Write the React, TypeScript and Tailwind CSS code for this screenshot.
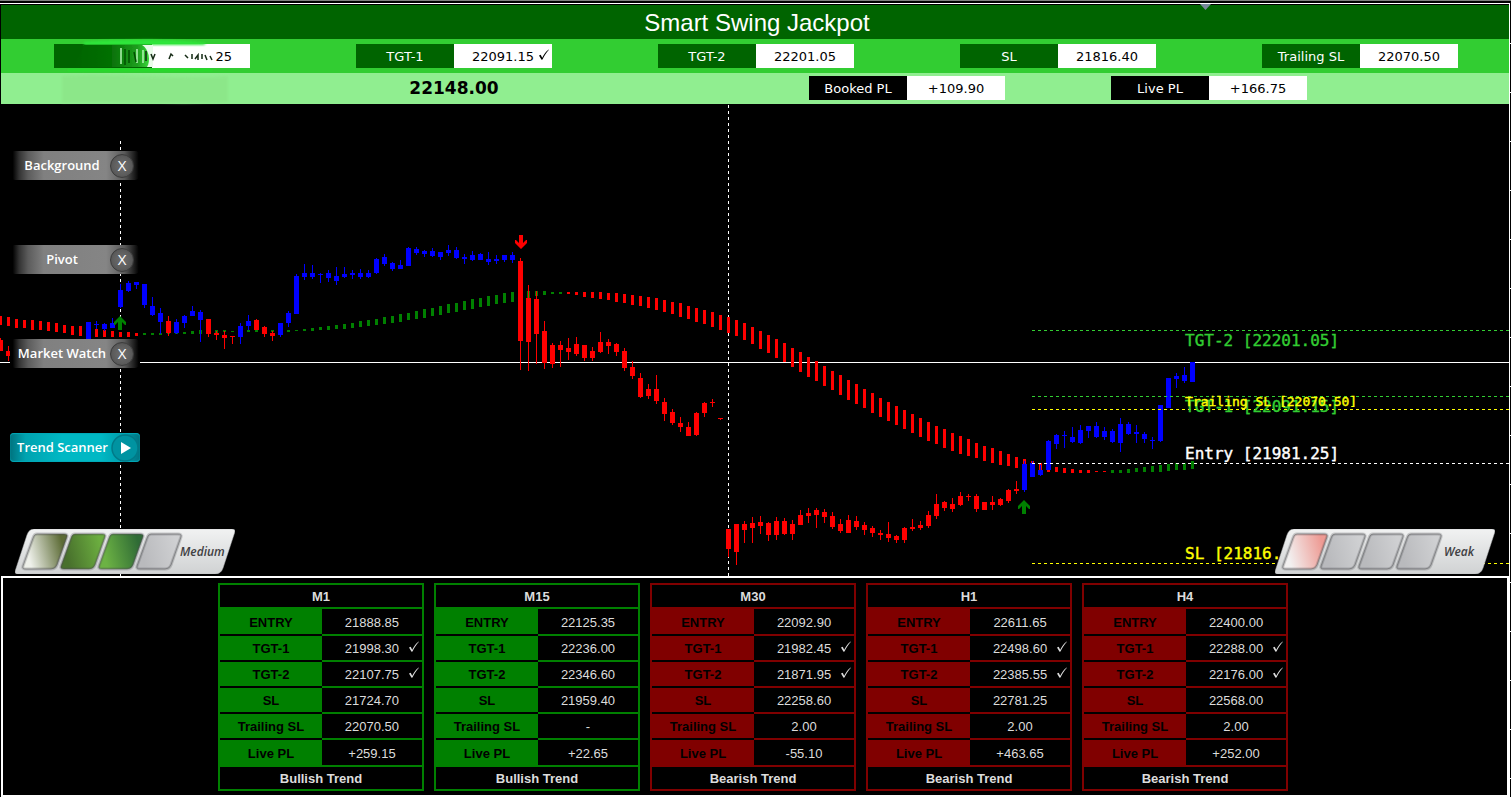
import { useId } from "react";

type Candle = [high: number, low: number, top: number, bottom: number, up: boolean];

interface TrendTable {
  frame: string;
  bullish: boolean;
  rows: { label: string; value: string; hit?: boolean }[];
}

const STEP = 8;
const CHART_TOP = 104;

// The oldest two bars stand apart from the visible run that starts at x = 88.
const EARLY_CANDLES: Candle[] = [
  [338, 351, 340, 351, false],
  [346, 361, 351, 356, false],
];

const CANDLES: Candle[] = [
  [322, 345, 322, 345, true], [321, 329, 324, 325, true], [323, 331, 324, 329, true], [318, 328, 323, 328, true],
  [284, 308, 290, 307, true], [281, 292, 283, 291, true], [282, 289, 282, 285, true], [284, 308, 284, 305, true],
  [297, 316, 306, 315, true], [308, 334, 313, 322, true], [316, 336, 321, 333, false], [319, 334, 322, 333, true],
  [315, 328, 316, 323, true], [306, 316, 311, 316, true], [310, 342, 312, 320, true], [319, 337, 319, 334, false],
  [331, 340, 333, 335, false], [331, 349, 335, 338, false], [336, 344, 336, 337, false], [323, 344, 326, 337, true],
  [315, 330, 321, 326, true], [319, 330, 320, 330, false], [326, 337, 327, 334, false], [331, 341, 333, 336, false],
  [323, 337, 323, 335, true], [311, 327, 313, 323, true], [274, 314, 276, 314, true], [264, 280, 273, 277, true],
  [265, 279, 273, 277, true], [273, 283, 274, 275, true], [270, 282, 273, 278, true], [267, 285, 276, 281, true],
  [267, 278, 274, 277, true], [270, 279, 273, 275, true], [269, 279, 273, 277, true], [270, 278, 273, 277, true],
  [258, 274, 259, 273, true], [254, 266, 257, 264, true], [262, 271, 263, 269, true], [260, 269, 265, 269, true],
  [247, 266, 248, 266, true], [247, 255, 249, 253, true], [250, 257, 251, 254, true], [248, 257, 251, 256, true],
  [252, 260, 252, 257, true], [245, 256, 250, 253, true], [247, 259, 250, 258, true], [254, 264, 257, 259, true],
  [251, 261, 255, 260, true], [253, 260, 254, 260, true], [252, 265, 259, 262, true], [255, 264, 259, 261, true],
  [255, 262, 255, 260, true], [252, 263, 255, 260, true], [258, 370, 261, 341, false], [285, 371, 298, 342, false],
  [291, 364, 299, 334, false], [321, 369, 331, 363, false], [343, 368, 345, 364, false], [341, 367, 345, 350, false],
  [338, 360, 348, 352, false], [337, 356, 344, 354, false], [345, 361, 345, 358, false], [347, 361, 351, 358, false],
  [332, 353, 342, 352, false], [339, 354, 342, 346, false], [343, 356, 344, 352, false], [348, 371, 351, 368, false],
  [361, 379, 367, 376, false], [373, 398, 378, 397, false], [384, 399, 389, 396, false], [375, 404, 389, 401, false],
  [398, 421, 402, 414, false], [409, 425, 412, 423, false], [417, 432, 423, 427, false], [422, 436, 427, 436, false],
  [412, 436, 413, 435, false], [402, 417, 403, 413, false], [399, 407, 402, 403, false], [418, 420, 418, 419, false],
  [529, 557, 529, 549, false], [524, 565, 524, 552, false], [521, 543, 524, 530, false], [517, 543, 523, 528, false],
  [516, 534, 522, 526, false], [522, 541, 523, 535, false], [517, 540, 521, 535, false], [518, 535, 521, 534, false],
  [520, 540, 524, 534, false], [510, 525, 515, 525, false], [508, 523, 513, 516, false], [508, 528, 510, 515, false],
  [509, 523, 512, 517, false], [512, 529, 516, 527, false], [519, 533, 524, 531, false], [515, 533, 520, 533, false],
  [516, 530, 521, 527, false], [522, 535, 525, 530, false], [526, 537, 528, 533, false], [530, 540, 533, 535, false],
  [522, 542, 534, 538, false], [535, 543, 536, 540, false], [527, 543, 528, 540, false], [519, 531, 527, 529, false],
  [521, 530, 525, 528, false], [511, 528, 515, 526, false], [494, 519, 504, 516, false], [501, 511, 502, 508, false],
  [498, 512, 504, 509, false], [492, 506, 496, 505, false], [494, 501, 496, 497, false], [494, 512, 496, 509, false],
  [502, 510, 502, 510, false], [496, 510, 502, 505, false], [498, 506, 499, 505, false], [489, 503, 490, 501, false],
  [481, 494, 489, 491, false], [461, 492, 464, 490, true], [461, 477, 463, 477, true], [465, 476, 470, 475, true],
  [440, 470, 441, 470, true], [434, 449, 435, 444, true], [431, 448, 435, 436, true], [427, 443, 437, 442, true],
  [425, 444, 430, 443, true], [426, 438, 426, 431, true], [422, 438, 426, 437, true], [427, 440, 431, 437, true],
  [429, 443, 431, 442, true], [418, 452, 424, 443, true], [422, 435, 424, 434, true], [425, 443, 432, 434, true],
  [432, 443, 434, 439, true], [437, 449, 440, 441, true], [405, 442, 405, 441, true], [378, 408, 378, 408, true],
  [373, 388, 376, 379, true], [367, 383, 375, 381, true], [362, 382, 362, 382, true],
];

// Moving average ribbon, one [top, bottom] pair per bar from x = 0.
const RIBBON: [number, number][] = [
  [316, 325], [317, 326], [319, 328], [320, 328], [320, 330], [321, 330], [322, 331], [323, 332], [325, 333], [326, 335],
  [326, 336], [327, 337], [329, 337], [330, 337], [331, 337], [332, 337], [332, 337], [333, 336], [333, 335], [333, 335],
  [333, 335], [333, 334], [333, 334], [332, 334], [331, 334], [330, 334], [330, 333], [330, 333], [330, 332], [331, 332],
  [331, 332], [330, 332], [330, 332], [330, 332], [330, 332], [330, 332], [330, 332], [330, 331], [329, 331], [328, 331],
  [327, 330], [326, 330], [325, 329], [324, 329], [323, 328], [321, 327], [320, 326], [319, 325], [317, 324], [316, 323],
  [314, 322], [313, 320], [311, 319], [309, 318], [308, 316], [306, 315], [304, 313], [303, 312], [301, 310], [299, 309],
  [298, 307], [296, 306], [295, 304], [293, 303], [292, 302], [292, 301], [291, 300], [291, 296], [291, 295], [292, 294],
  [292, 294], [292, 294], [292, 295], [292, 297], [292, 298], [292, 299], [293, 300], [293, 302], [294, 303], [295, 305],
  [296, 306], [297, 308], [298, 310], [300, 312], [302, 314], [303, 317], [306, 319], [308, 322], [310, 324], [312, 327],
  [315, 330], [317, 333], [320, 336], [323, 340], [327, 344], [331, 349], [335, 353], [339, 358], [343, 362], [348, 367],
  [352, 372], [357, 377], [361, 381], [366, 386], [371, 390], [375, 395], [380, 400], [384, 404], [389, 408], [393, 413],
  [398, 417], [402, 421], [406, 425], [410, 429], [414, 433], [418, 437], [422, 441], [426, 444], [429, 448], [433, 451],
  [436, 454], [439, 456], [443, 458], [446, 461], [448, 463], [451, 465], [454, 466], [457, 468], [459, 469], [461, 470],
  [463, 471], [465, 472], [467, 472], [468, 473], [469, 473], [470, 473], [470, 473], [471, 472], [471, 472], [470, 473],
  [470, 473], [469, 473], [468, 472], [467, 472], [466, 472], [465, 472], [464, 471], [463, 470], [463, 470], [461, 469],
];

const LEVELS = [
  { y: 330, color: "#32cd32", text: "TGT-2 [22201.05]", size: 16, baseline: 346 },
  { y: 396, color: "#32cd32", text: "TGT-1 [22091.15]", size: 16, baseline: 412 },
  { y: 463, color: "#ffffff", text: "Entry [21981.25]", size: 16, baseline: 459 },
  { y: 563, color: "#ffff00", text: "SL [21816.40]", size: 16, baseline: 559 },
  { y: 409, color: "#ffff00", text: "Trailing SL [22070.50]", size: 13, baseline: 406 },
];

const TABLES: TrendTable[] = [
  {
    frame: "M1",
    bullish: true,
    rows: [
      { label: "ENTRY", value: "21888.85" },
      { label: "TGT-1", value: "21998.30", hit: true },
      { label: "TGT-2", value: "22107.75", hit: true },
      { label: "SL", value: "21724.70" },
      { label: "Trailing SL", value: "22070.50" },
      { label: "Live PL", value: "+259.15" },
    ],
  },
  {
    frame: "M15",
    bullish: true,
    rows: [
      { label: "ENTRY", value: "22125.35" },
      { label: "TGT-1", value: "22236.00" },
      { label: "TGT-2", value: "22346.60" },
      { label: "SL", value: "21959.40" },
      { label: "Trailing SL", value: "-" },
      { label: "Live PL", value: "+22.65" },
    ],
  },
  {
    frame: "M30",
    bullish: false,
    rows: [
      { label: "ENTRY", value: "22092.90" },
      { label: "TGT-1", value: "21982.45", hit: true },
      { label: "TGT-2", value: "21871.95", hit: true },
      { label: "SL", value: "22258.60" },
      { label: "Trailing SL", value: "2.00" },
      { label: "Live PL", value: "-55.10" },
    ],
  },
  {
    frame: "H1",
    bullish: false,
    rows: [
      { label: "ENTRY", value: "22611.65" },
      { label: "TGT-1", value: "22498.60", hit: true },
      { label: "TGT-2", value: "22385.55", hit: true },
      { label: "SL", value: "22781.25" },
      { label: "Trailing SL", value: "2.00" },
      { label: "Live PL", value: "+463.65" },
    ],
  },
  {
    frame: "H4",
    bullish: false,
    rows: [
      { label: "ENTRY", value: "22400.00" },
      { label: "TGT-1", value: "22288.00", hit: true },
      { label: "TGT-2", value: "22176.00", hit: true },
      { label: "SL", value: "22568.00" },
      { label: "Trailing SL", value: "2.00" },
      { label: "Live PL", value: "+252.00" },
    ],
  },
];

function ribbonColor(index: number) {
  if (index < 18) return "#ff0000";
  if (index < 71) return "#008000";
  if (index < 139) return "#ff0000";
  return "#008000";
}

function CheckMark({ className }: { className: string }) {
  return (
    <svg className={className} width="12" height="12" viewBox="0 0 12 12" fill="currentColor" aria-label="hit">
      <path d="M1 6.600 L2.700 5.800 L4.200 8.800 C6 5 8 2.400 10.800 0.400 L11 0.700 C8.200 3.600 6.100 7 4.500 10.600 L3.500 10.800 Z" />
    </svg>
  );
}

function Field({ label, value, dark, hit }: { label: string; value: string; dark?: boolean; hit?: boolean }) {
  return (
    <div className="flex h-6 w-[196px] text-[13px] leading-[26px]">
      <span className={`w-1/2 text-center text-white ${dark ? "bg-black" : "bg-[#006400]"}`}>{label}</span>
      <span className="relative w-1/2 bg-white text-center text-black">
        {value}
        {hit && <CheckMark className="absolute top-[5px] right-[2px]" />}
      </span>
    </div>
  );
}

// Entry price with a smudge painted over everything but the last two digits.
function SmudgedEntry() {
  return (
    <div className="relative flex h-6 w-[196px] text-[13px] leading-[26px]">
      <span className="w-1/2 bg-[#006400]" />
      <span className="w-1/2 bg-white pr-[18px] text-right text-black">25</span>
      <svg className="absolute -top-2 left-0" width="196" height="72" viewBox="0 0 196 72" aria-hidden="true">
        <defs>
          <linearGradient id="smudge" x1="0" x2="1">
            <stop offset="0" stopColor="#006400" />
            <stop offset="0.5" stopColor="#067006" />
            <stop offset="0.68" stopColor="#128a12" />
            <stop offset="0.85" stopColor="#1f9f1f" />
            <stop offset="1" stopColor="#3ad63a" />
          </linearGradient>
          <filter id="soft" x="-20%" y="-50%" width="140%" height="200%">
            <feGaussianBlur stdDeviation="1" />
          </filter>
          <filter id="edge" x="-10%" y="-10%" width="120%" height="120%">
            <feGaussianBlur stdDeviation="0.5" />
          </filter>
        </defs>
        <path d="M30 6 C70 3 120 3 152 7 L150 9 H30 Z" fill="#2ee63a" filter="url(#soft)" />
        <path d="M14 33 H158 V35 H14 Z" fill="#24e02c" filter="url(#soft)" />
        <path d="M88 9 H99 V31 H93 Z" fill="#e9fbe9" />
        <path d="M30 9 H88 C95 13 97 25 93 31 H20 Z" fill="url(#smudge)" filter="url(#edge)" />
        <g fill="none" filter="url(#edge)">
          <path d="M67 12 V28 M83 13 V27 M89 14 V27" stroke="#b5f5b5" strokeWidth="1.5" />
          <path d="M71 13 V29 M75 14 V27 M80 16 L82 26" stroke="#055005" strokeWidth="1.500" />
          <path
            d="M92 15 V25 M97 18 L99 23 L101 18 M115 23 L117 18 L119 20 M131 19 L134 22 M138 18 V23 M141 23 L144 19 V24 M148 18 V23 M151 19 L153 24 M156 20 L158 24"
            stroke="#152a15"
            strokeWidth="1.500"
          />
        </g>
        <path d="M8 40 C60 36 120 44 174 40 V66 C120 70 60 64 8 67 Z" fill="#8be486" opacity="0.6" filter="url(#soft)" />
      </svg>
    </div>
  );
}

function Header() {
  return (
    <header className="relative ml-px font-['Verdana','DejaVu_Sans',sans-serif]">
      <svg className="absolute -top-px left-[1199px]" width="11" height="6" viewBox="0 0 11 6" aria-hidden="true">
        <path d="M0 0 H11 L5.5 6 Z" fill="#778899" />
      </svg>
      <h1 className="h-[34px] bg-[#006400] pl-1 text-center font-['Liberation_Sans',sans-serif] text-[24px] leading-9 text-white">
        Smart Swing Jackpot
      </h1>
      <div className="flex h-[34px] items-center justify-between bg-[#32cd32] pr-[51px] pl-[53px]">
        <SmudgedEntry />
        <Field label="TGT-1" value="22091.15" hit />
        <Field label="TGT-2" value="22201.05" />
        <Field label="SL" value="21816.40" />
        <Field label="Trailing SL" value="22070.50" />
      </div>
      <div className="flex h-[31px] items-center bg-[#90ee90] pr-[202px] pb-px pl-[355px]">
        <strong className="w-[196px] text-center text-[17px] leading-6 text-black">22148.00</strong>
        <div className="ml-auto flex gap-[106px]">
          <Field label="Booked PL" value="+109.90" dark />
          <Field label="Live PL" value="+166.75" dark />
        </div>
      </div>
    </header>
  );
}

function CandleBar({ x, candle }: { x: number; candle: Candle }) {
  const [high, low, top, bottom, up] = candle;
  return (
    <g fill={up ? "#0000ff" : "#ff0000"}>
      <rect x={x} y={high} width="1" height={low - high} />
      <rect x={x - 2} y={top} width="5" height={bottom - top} />
    </g>
  );
}

function Arrow({ x, y, color, down }: { x: number; y: number; color: string; down?: boolean }) {
  return (
    <path
      transform={`translate(${x} ${y}) scale(1 ${down ? -1 : 1})`}
      d="M0 -7 L6 -1 V2 H5 L2 -1 V7 H-2 V-1 L-5 2 H-6 V-1 Z"
      fill={color}
    />
  );
}

function PriceChart() {
  return (
    <svg className="block w-full" height="472" role="img" aria-label="Price chart">
      <g transform={`translate(0 ${-CHART_TOP})`}>
        <g shapeRendering="crispEdges">
          <line x1="120.5" y1="141" x2="120.5" y2="576" stroke="#fff" strokeDasharray="3 3" />
          <line x1="728.5" y1="105" x2="728.5" y2="576" stroke="#fff" strokeDasharray="3 3" />
          <rect x="0" y="362" width="100%" height="1" fill="#fff" />
          {RIBBON.map(([top, bottom], i) => (
            <rect key={i} x={i * STEP - 1} y={top} width="3" height={bottom - top} fill={ribbonColor(i)} />
          ))}
          {EARLY_CANDLES.map((candle, i) => (
            <CandleBar key={i} x={i * STEP} candle={candle} />
          ))}
          {CANDLES.map((candle, i) => (
            <CandleBar key={i} x={88 + i * STEP} candle={candle} />
          ))}
          {LEVELS.map((level) => (
            <line
              key={level.text}
              x1="1032"
              x2="100%"
              y1={level.y + 0.5}
              y2={level.y + 0.5}
              stroke={level.color}
              strokeDasharray="3 3"
            />
          ))}
        </g>
        <Arrow x={120} y={323} color="#008000" />
        <Arrow x={1024} y={507} color="#008000" />
        <Arrow x={521} y={242} color="#ff0000" down />
        <g className="font-['DejaVu_Sans_Mono',monospace]">
          {LEVELS.map((level) => (
            <text key={level.text} x="1185" y={level.baseline} fontSize={level.size} fill={level.color} stroke={level.color} strokeWidth="0.4">
              {level.text}
            </text>
          ))}
        </g>
      </g>
    </svg>
  );
}

function PanelButton({ label }: { label: string }) {
  return (
    <button type="button" className="flex h-[29px] w-[130px] items-center bg-black">
      <span className="flex h-full w-full items-center rounded-[5px] bg-[linear-gradient(90deg,#000_0%,#000_2%,#333_7%,#5c5c5c_14%,#808080_26%,#858585_74%,#5a5a5a_88%,#222_95%,#000_99%)]">
        <span className="flex-1 pb-[2px] pl-1 text-center">{label}</span>
        <span className="mr-[6px] flex size-[24px] items-center justify-center rounded-full border border-[#3c3c3c] bg-[radial-gradient(circle,#6e6e6e_0%,#5c5c5c_60%,#444_100%)] pb-px text-[15px] font-normal">
          X
        </span>
      </span>
    </button>
  );
}

function ScannerButton() {
  return (
    <button
      type="button"
      className="flex h-[29px] w-[130px] items-center rounded-[4px] bg-[linear-gradient(90deg,#00737f_0%,#00a3b0_12%,#00b8c4_40%,#00b8c4_70%,#009aa8_88%,#007482_100%)] shadow-[inset_0_1px_1px_#00a9b8,inset_0_-1px_1px_#00a9b8]"
    >
      <span className="flex-1 pb-[2px] pl-1 text-center">Trend Scanner</span>
      <svg className="mr-px" width="28" height="28" viewBox="0 0 28 28" aria-hidden="true">
        <circle cx="14" cy="14" r="13" fill="#0093a1" stroke="#007a88" strokeWidth="1.5" />
        <path d="M10 8 L20 14 L10 20 Z" fill="#fff" />
      </svg>
    </button>
  );
}

interface MeterProps {
  text: string;
  label: string;
  cells: [from: string, to: string][];
}

function StrengthMeter({ text, label, cells }: MeterProps) {
  const id = useId();
  return (
    <svg className="block" width="220" height="45" viewBox="0 0 220 45" role="img" aria-label={label}>
      <defs>
        <linearGradient id={`${id}body`} x1="0" y1="0" x2="0" y2="1">
          <stop offset="0" stopColor="#f1f2f2" />
          <stop offset="1" stopColor="#d0d2d3" />
        </linearGradient>
        {cells.map(([from, to], i) => (
          <linearGradient key={i} id={`${id}c${i}`} x1="0" y1="0.6" x2="1" y2="0.4">
            <stop offset="0.12" stopColor={from} />
            <stop offset="0.92" stopColor={to} />
          </linearGradient>
        ))}
      </defs>
      <path
        d="M19 0 H217 Q221 0 219.500 4 L208 39 Q206 45 200 45 H3 Q-1 45 0.500 41 L12 6 Q14 0 19 0 Z"
        fill={`url(#${id}body)`}
        stroke="#b4b6b8"
        strokeWidth="0.5"
      />
      {cells.map((_, i) => (
        <g key={i} transform={`translate(${i * 38} 0)`}>
          <path
            d="M22 5 H49 Q53 5 52 8 L42 36 Q40.500 40 36 40 H11 Q7 40 8 37 L18 9 Q19 5 22 5 Z"
            fill={`url(#${id}c${i})`}
            stroke="#4b4d50"
            strokeOpacity="0.25"
            strokeWidth="3"
          />
          <path
            d="M22 5 H49 Q53 5 52 8 L42 36 Q40.500 40 36 40 H11 Q7 40 8 37 L18 9 Q19 5 22 5 Z"
            fill="none"
            stroke="#4b4d50"
            strokeOpacity="0.45"
          />
        </g>
      ))}
      <text x={text === "Weak" ? 169 : 165} y="27" fontSize="12" fontWeight="600" fontStyle="italic" fill="#414042" className="font-['Open_Sans',sans-serif]">
        {text}
      </text>
    </svg>
  );
}

const GREY: [string, string] = ["#b9babd", "#cfd0d2"];

function TimeframeTable({ frame, bullish, rows }: TrendTable) {
  const edge = bullish ? "border-[#008000]" : "border-[#800000]";
  const fill = bullish ? "bg-[#008000]" : "bg-[#800000]";
  return (
    <table className={`w-[206px] table-fixed border-separate border-spacing-0 border-2 text-center text-[13px] leading-5 text-[#dcdcdc] ${edge}`}>
      <colgroup>
        <col className="w-[102px]" />
        <col className="w-[100px]" />
      </colgroup>
      <thead>
        <tr>
          <th colSpan={2} className={`h-6 border-b-2 px-0 pt-[2px] pb-0 ${edge}`}>
            {frame}
          </th>
        </tr>
      </thead>
      <tbody>
        {rows.map((row, i) => {
          const height = i === 0 || i === rows.length - 1 ? "h-[27px]" : "h-[26px]";
          return (
            <tr key={row.label}>
              <th
                scope="row"
                className={`border-b-2 px-0 pt-[2px] pb-0 text-black ${height} ${fill} ${i === rows.length - 1 ? edge : "border-black"}`}
              >
                {row.label}
              </th>
              <td className={`relative border-b-2 px-0 pt-[2px] pb-0 ${height} ${edge}`}>
                {row.value}
                {row.hit && <CheckMark className="absolute top-[5px] right-[2px]" />}
              </td>
            </tr>
          );
        })}
      </tbody>
      <tfoot>
        <tr>
          <th colSpan={2} className="h-[22px] px-0 pt-[2px] pb-0">
            {bullish ? "Bullish Trend" : "Bearish Trend"}
          </th>
        </tr>
      </tfoot>
    </table>
  );
}

export default function App() {
  return (
    <div className="relative flex min-h-screen flex-col overflow-hidden border-t border-[#808080] bg-black pt-[2px]">
      <div className="absolute top-[42px] right-0 bottom-0 w-px bg-[repeating-linear-gradient(180deg,#fff_0px,#fff_1px,#000_1px,#000_49px)]" />
      <main className="relative mr-px flex flex-1 flex-col border-t border-r border-white pt-px">
        <Header />
        <section className="relative">
          <PriceChart />
          <nav className="absolute top-[47px] left-[10px] flex flex-col gap-[65px] font-['Open_Sans',sans-serif] text-[13px] leading-5 font-semibold text-white">
            <PanelButton label="Background" />
            <PanelButton label="Pivot" />
            <PanelButton label="Market Watch" />
            <ScannerButton />
          </nav>
          <div className="absolute bottom-[2px] left-[15px]">
            <StrengthMeter
              text="Medium"
              label="Buy strength"
              cells={[["#eef0ea", "#5c6b35"], ["#48702c", "#6cae40"], ["#6cb244", "#2f6b35"], GREY]}
            />
          </div>
          <div className="absolute right-[14px] bottom-[2px]">
            <StrengthMeter text="Weak" label="Sell strength" cells={[["#f2f0f0", "#ee9a93"], GREY, GREY, GREY]} />
          </div>
        </section>
        <section className="ml-px flex flex-1 items-start justify-center gap-[10px] border-2 border-white pt-[5px] pr-1 font-['Liberation_Sans',sans-serif]">
          {TABLES.map((table) => (
            <TimeframeTable key={table.frame} {...table} />
          ))}
        </section>
      </main>
    </div>
  );
}
